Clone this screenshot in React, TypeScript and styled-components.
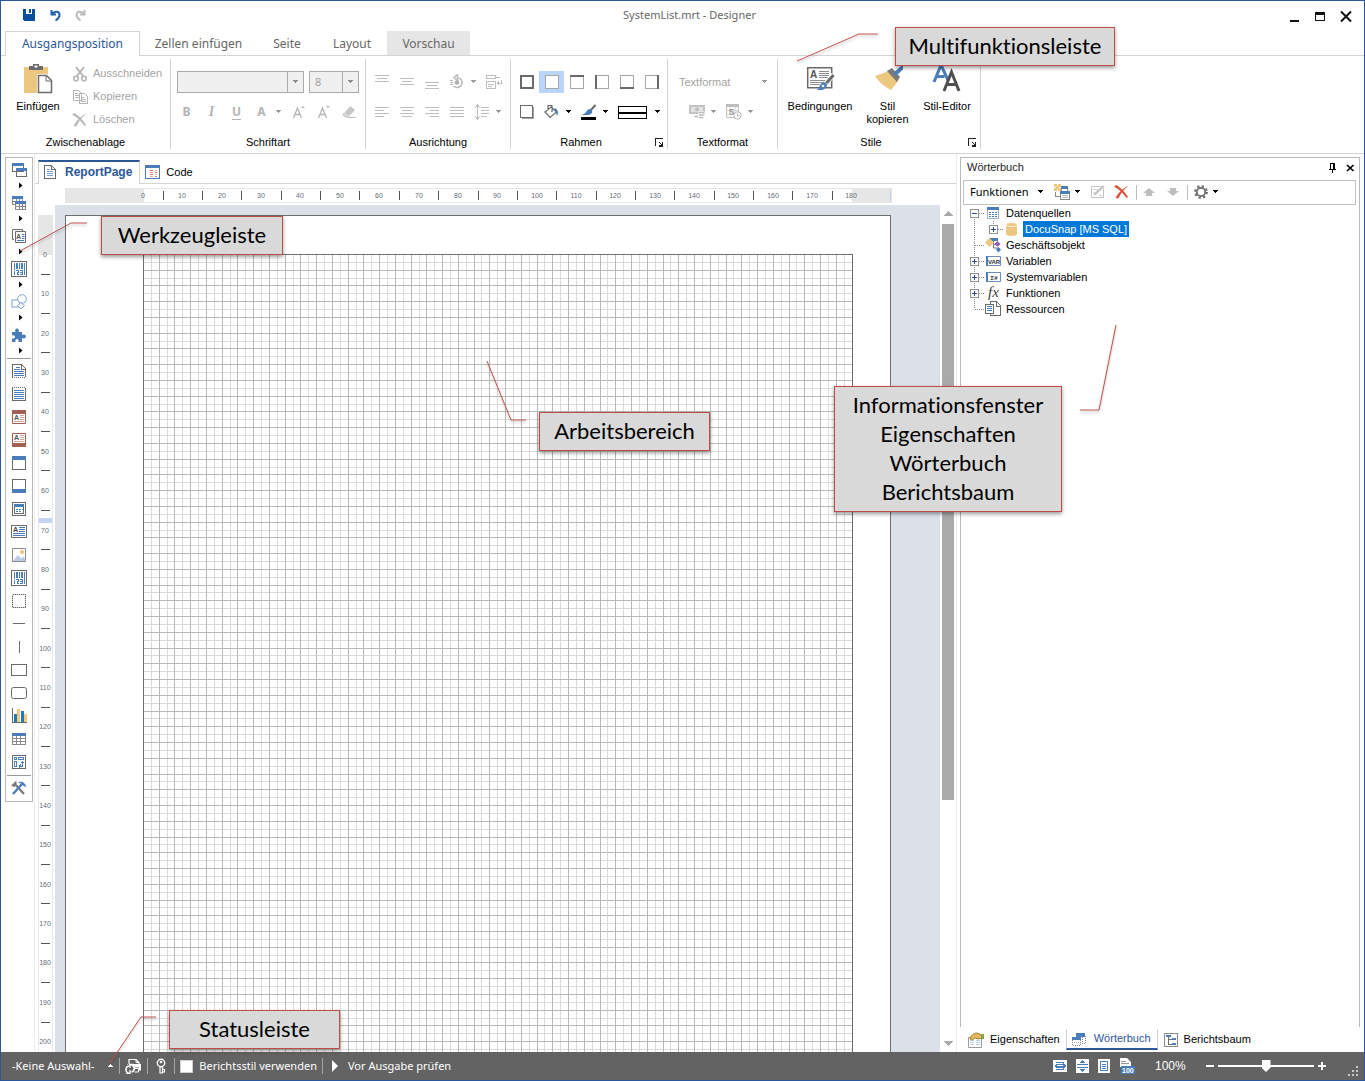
import React from 'react';
import styled, { createGlobalStyle, css } from 'styled-components';

const sans = '"Liberation Sans", Arial, sans-serif';
const ui = '"Noto Sans", "Open Sans", sans-serif';
const blue = '#2b579a';
const line = '#d4d4d4';
const steel = '#4a7ebb';
const ink = '#6a6a6a';
const mute = '#b4b4b4';

const GlobalStyle = createGlobalStyle`
  * { box-sizing: border-box; }
  body { margin: 0; background: #fff; }
  button, select, input { font: inherit; color: inherit; }
  svg { display: block; flex: none; }
`;

const Window = styled.div`
  position: relative;
  display: flex;
  flex-direction: column;
  height: 100vh;
  border: 1px solid ${blue};
  background: #fff;
  color: #000;
  font: 11px/13px ${sans};
  overflow: hidden;
`;

const PlainButton = styled.button`
  display: flex;
  align-items: center;
  justify-content: center;
  padding: 0;
  border: 0;
  background: none;
  white-space: nowrap;
`;

/* ---------- title bar ---------- */

const TitleBar = styled.header`
  display: grid;
  grid-template-columns: 1fr auto 1fr;
  align-items: center;
  height: 30px;
  padding-bottom: 2px;
  flex: none;
`;
const QuickAccess = styled.div`
  display: flex;
  gap: 10px;
  padding-left: 20px;
`;
const Title = styled.h1`
  margin: 0;
  padding-left: 14px;
  font: 11px/16px ${ui};
  color: #666;
`;
const WindowButtons = styled.div`
  display: flex;
  justify-content: flex-end;
  gap: 10px;
  padding: 2px 10px 0 0;
`;

/* ---------- ribbon ---------- */

const Tabs = styled.nav`
  display: flex;
  flex: none;
  height: 25px;
  padding-left: 4px;
  border-bottom: 1px solid ${line};
`;
const Tab = styled.button<{ $w: number; $active?: boolean; $shaded?: boolean }>`
  width: ${p => p.$w}px;
  height: 24px;
  padding: 2px 0 0;
  border: 0;
  background: ${p => (p.$shaded ? '#e6e6e6' : 'none')};
  font: 12px/16px ${ui};
  color: #666;
  white-space: nowrap;
  ${p => p.$active && css`
    height: 25px;
    padding: 0;
    border: 1px solid ${line};
    border-bottom: 0;
    background: #fff;
    color: ${blue};
  `}
`;
const Ribbon = styled.div`
  display: flex;
  flex: none;
  height: 98px;
  padding-top: 3px;
  border-bottom: 1px solid ${line};
`;
const Group = styled.section<{ $w: number }>`
  display: flex;
  flex-direction: column;
  width: ${p => p.$w}px;
  height: 90px;
  border-right: 1px solid ${line};
`;
const GroupBody = styled.div<{ $pad?: string }>`
  display: flex;
  height: 76px;
  padding: ${p => p.$pad ?? '0'};
`;
const ToolRows = styled.div`
  display: flex;
  flex-direction: column;
  gap: 8px;
`;
const GroupFoot = styled.div`
  display: flex;
  align-items: center;
  height: 14px;
  button { width: 16px; }
`;
const GroupName = styled.h2`
  flex: 1;
  margin: 0;
  font: 11px/14px ${sans};
  text-align: center;
`;
const BigButton = styled(PlainButton)<{ $w: number }>`
  flex-direction: column;
  justify-content: flex-start;
  width: ${p => p.$w}px;
  padding-top: 4px;
  line-height: 13px;
  white-space: normal;
  svg { margin-bottom: 6px; }
`;
const ClipList = styled.div`
  display: flex;
  flex-direction: column;
  padding: 3px 0 0 5px;
`;
const ClipButton = styled(PlainButton)`
  justify-content: flex-start;
  gap: 5px;
  height: 23px;
  color: #a3a3a3;
`;
const ToolRow = styled.div<{ $indent?: number }>`
  display: flex;
  align-items: center;
  height: 22px;
  padding-left: ${p => p.$indent ?? 0}px;
`;
const Tool = styled(PlainButton)<{ $on?: boolean; $w?: number }>`
  width: ${p => p.$w ?? 25}px;
  height: 22px;
  background: ${p => (p.$on ? '#bad4fb' : 'none')};
`;
const CaretButton = styled(PlainButton)`
  justify-content: flex-end;
  width: 8px;
  height: 22px;
  margin-right: 4px;
`;
const Glyph = styled.span<{ $italic?: boolean; $line?: boolean }>`
  font: ${p => (p.$italic ? 'italic bold 14px/16px "Liberation Serif", serif' : `bold 12px/16px ${ui}`)};
  color: ${mute};
  text-decoration: ${p => (p.$line ? 'underline' : 'none')};
  text-underline-offset: 3px;
`;
const SelectBox = styled.label<{ $w: number; $flat?: boolean }>`
  display: flex;
  align-items: center;
  width: ${p => p.$w}px;
  height: 22px;
  border: ${p => (p.$flat ? '0' : '1px solid #ababab')};
  background: ${p => (p.$flat ? 'none' : '#f0f0f0')};
  color: #a3a3a3;
  font: 11px/20px ${p => (p.$flat ? sans : ui)};
  select {
    flex: 1;
    min-width: 0;
    height: 20px;
    padding: 0 0 0 5px;
    border: 0;
    border-right: ${p => (p.$flat ? '0' : '1px solid #ababab')};
    background: none;
    appearance: none;
    opacity: 1;
  }
  svg { margin: 0 4px 0 5px; }
`;
const Combos = styled.div`
  display: flex;
  gap: 5px;
  padding-left: 3px;
`;

/* ---------- workspace ---------- */

const Workspace = styled.main`
  display: flex;
  flex: 1;
  min-height: 0;
`;
const Toolbox = styled.aside`
  display: flex;
  flex-direction: column;
  align-self: flex-start;
  width: 28px;
  margin: 3px 0 0 4px;
  padding-bottom: 2px;
  border: 1px solid #b9b9b9;
`;
const FlyoutTool = styled(PlainButton)`
  flex-direction: column;
  justify-content: flex-start;
  height: 33px;
  span { display: flex; align-items: center; height: 24px; }
`;
const BoxTool = styled(PlainButton)`
  height: 23px;
`;
const BoxRule = styled.hr`
  width: 24px;
  height: 1px;
  margin: 2px auto 0;
  border: 0;
  background: #9a9a9a;
`;
const Editor = styled.section`
  display: flex;
  flex: 1;
  flex-direction: column;
  min-width: 0;
  margin-left: 1px;
  border: solid #ececec;
  border-width: 0 1px;
`;
const DocTabs = styled.div`
  display: flex;
  flex: none;
  height: 30px;
  padding: 6px 0 0 3px;
  border-bottom: 1px solid ${line};
`;
const DocTab = styled.button<{ $active?: boolean }>`
  display: flex;
  align-items: center;
  gap: 5px;
  height: 24px;
  padding: 0 5px;
  border: 0;
  background: none;
  ${p => p.$active && css`
    gap: 9px;
    padding: 0 7px 2px 5px;
    border: solid ${line};
    border-width: 2px 1px 0;
    border-top-color: ${blue};
    background: #fff;
    color: ${blue};
    font: bold 12px/14px ${sans};
  `}
`;
const TopRuler = styled.div`
  flex: none;
  height: 21px;
  padding: 4px 0 0 30px;
  overflow: hidden;
`;
const EditorBody = styled.div`
  display: flex;
  flex: 1;
  min-height: 0;
`;
const SideRuler = styled.div`
  width: 20px;
  padding: 10px 0 0 3px;
  overflow: hidden;
`;
const Canvas = styled.div`
  flex: 1;
  min-width: 0;
  padding: 10px 0 0 10px;
  background: #dce1e9;
  overflow: hidden;
`;
const Paper = styled.div`
  width: 826px;
  height: 1170px;
  padding: 38px 0 0 77px;
  border: 1px solid #6e6e6e;
  background: #fff;
`;
const Scrollbar = styled.div`
  display: flex;
  flex-direction: column;
  align-items: center;
  width: 16px;
  padding: 6px 0;
`;
const ScrollTrack = styled.div`
  flex: 1;
  width: 12px;
  margin: 8px 0 6px;
`;
const ScrollThumb = styled.div`
  height: 71%;
  background: #aaa;
`;

/* ---------- dock ---------- */

const Dock = styled.aside`
  display: flex;
  flex-direction: column;
  width: 400px;
  margin: 3px 4px 0 3px;
`;
const DockPanel = styled.div`
  flex: 1;
  border: 1px solid #b9b9b9;
  border-bottom: 0;
`;
const DockTitle = styled.div`
  display: flex;
  align-items: center;
  height: 19px;
  padding-left: 6px;
  color: #222;
  h2 { flex: 1; margin: 0; font: inherit; }
`;
const DockTitleButton = styled(PlainButton)`
  width: 18px;
  height: 16px;
`;
const DockTools = styled.div`
  display: flex;
  align-items: center;
  height: 25px;
  margin: 3px 3px 0 2px;
  padding: 0 0 1px 6px;
  border: 1px solid #c3c3c3;
`;
const TextTool = styled(PlainButton)`
  gap: 10px;
  margin-right: 10px;
  font: 11px/16px ${ui};
`;
const DockTool = styled(PlainButton)<{ $w: number }>`
  justify-content: flex-start;
  gap: 5px;
  width: ${p => p.$w}px;
  height: 20px;
`;
const ToolRule = styled.span`
  width: 1px;
  height: 15px;
  margin-right: 6px;
  background: #bdbdbd;
`;
const Tree = styled.ul`
  margin: 0;
  padding: 0 0 0 5px;
  list-style: none;
`;
const TreeRow = styled.li`
  display: flex;
  align-items: center;
  height: 16px;
`;
const TreeLabel = styled.span<{ $selected?: boolean }>`
  margin-left: 3px;
  padding: 0 2px;
  line-height: 16px;
  color: ${p => (p.$selected ? '#fff' : '#000')};
  background: ${p => (p.$selected ? '#0078d7' : 'none')};
`;
const DockTabs = styled.div`
  display: flex;
  height: 25px;
  padding: 2px 0 3px 2px;
`;
const DockTab = styled.button<{ $active?: boolean }>`
  display: flex;
  align-items: center;
  gap: 6px;
  height: 21px;
  padding: 0 6px;
  border: 0;
  background: none;
  ${p => p.$active && css`
    gap: 8px;
    padding: 0 6px 0 5px;
    border: solid ${line};
    border-width: 0 1px 2px;
    border-bottom-color: ${blue};
    color: ${blue};
  `}
`;

/* ---------- status bar ---------- */

const StatusBar = styled.footer`
  display: flex;
  align-items: center;
  flex: none;
  height: 28px;
  padding: 0 4px 0 11px;
  background: #636363;
  color: #fff;
  font: 11px/16px ${ui};
`;
const StatusButton = styled(PlainButton)<{ $gap?: number }>`
  gap: ${p => p.$gap ?? 10}px;
`;
const StatusRule = styled.span`
  width: 1px;
  height: 16px;
  margin: 0 5px;
  background: #a5a5a5;
`;
const StatusCheck = styled.label`
  display: flex;
  align-items: center;
  gap: 6px;
  input {
    width: 13px;
    height: 13px;
    margin: 0;
    appearance: none;
    border: 1px solid #d0d0d0;
    background: #fff;
  }
`;
const Push = styled.span`
  flex: 1;
`;
const ZoomModes = styled.div`
  display: flex;
  gap: 8px;
  margin-right: 20px;
`;
const ZoomSlider = styled.input`
  width: 96px;
  height: 14px;
  margin: 0 4px;
  appearance: none;
  background: linear-gradient(#fff, #fff) center / 100% 2px no-repeat;
  &::-webkit-slider-thumb {
    appearance: none;
    width: 9px;
    height: 12px;
    background: #fff;
    clip-path: polygon(0 0, 100% 0, 100% 65%, 50% 100%, 0 65%);
  }
`;
const ZoomValue = styled.output`
  width: 51px;
  font: 12px/16px ${sans};
`;
const Grip = styled.span`
  align-self: flex-end;
  margin: 0 1px 3px 22px;
`;

/* ---------- annotations ---------- */

const Callout = styled.div<{ $x: number; $y: number; $w: number }>`
  position: absolute;
  left: ${p => p.$x}px;
  top: ${p => p.$y}px;
  width: ${p => p.$w}px;
  padding: 3px 0 5px;
  border: 1px solid #be4b48;
  background: #d9d9d9;
  box-shadow: 0 2px 4px rgba(0, 0, 0, 0.4);
  font: 22px/29px Lato, Calibri, sans-serif;
  font-variant-ligatures: none;
  text-align: center;
  white-space: pre-line;
`;
const Leaders = styled.svg`
  position: absolute;
  left: -1px;
  top: -1px;
  pointer-events: none;
  filter: drop-shadow(0 2px 1px rgba(0, 0, 0, 0.25));
`;

/* ---------- icons ---------- */

type IconProps = { w?: number; h?: number; soft?: boolean; children: React.ReactNode };
const Icon = ({ w = 16, h = 16, soft, children }: IconProps) => (
  <svg width={w} height={h} viewBox={`0 0 ${w} ${h}`} fill="none" shapeRendering={soft ? 'auto' : 'crispEdges'} aria-hidden="true">
    {children}
  </svg>
);

const Caret = ({ color = '#000' }: { color?: string }) => (
  <Icon w={6} h={4}><path d="M0 0h5v1H0zM1 1h3v1H1zM2 2h1v1H2z" fill={color} /></Icon>
);
const SideCaret = () => (
  <Icon w={8} h={7} soft><path d="M4 .5v6l3.500-3z" fill="#000" /></Icon>
);
const Launcher = () => (
  <Icon w={9} h={9}><path d="M.5 8V.5H8M4 4l3 3" stroke="#222" /><path d="M8 4v4.500H4V7h3V4z" fill="#222" /></Icon>
);

const SaveIcon = () => (
  <Icon><path d="M2 2h12v12H3l-1-1z" fill="#0b4f9c" /><path d="M5 2h6v5H5z" fill="#fff" /><path d="M8 2h2v4H8z" fill="#0b4f9c" /></Icon>
);
const UndoIcon = ({ color = '#1f5fae', flip }: { color?: string; flip?: boolean }) => (
  <Icon soft><g transform={flip ? 'translate(16 0) scale(-1 1)' : undefined}>
    <path d="M4.500 3v4.500H9M5 7C7 4 12.500 3.500 12.500 8c0 3-2 4-4 5.500" stroke={color} strokeWidth="2" />
  </g></Icon>
);
const PasteIcon = () => (
  <Icon w={30} h={31} soft>
    <path d="M1 4h24v26H1z" fill="#ecc77f" />
    <path d="M6 7V3h4V1h6v2h4v4z" fill="#6c6c6c" /><path d="M11.500 2.500h3v2h-3z" fill="#fff" />
    <path d="M14 11h10l6 6v14H14z" fill="#fff" />
    <path d="M15.500 12.500h8l5 5v12h-13z" fill="#fff" stroke="#6c6c6c" strokeWidth="1.500" /><path d="M23 12.500V18h5.500" stroke="#6c6c6c" />
  </Icon>
);
const CutIcon = () => (
  <Icon soft><path d="M4 1l7 9M12 1L5 10" stroke="#b5b5b5" strokeWidth="2" /><circle cx="4" cy="12.500" r="2.300" stroke="#b5b5b5" strokeWidth="1.600" /><circle cx="12" cy="12.500" r="2.300" stroke="#b5b5b5" strokeWidth="1.600" /></Icon>
);
const CopyIcon = () => (
  <Icon><path d="M1.500 1.500h5l3 3v7h-8zM7.500 4.500h5l3 3v7h-8z" fill="#fff" stroke="#b5b5b5" /><path d="M3 4.500h3M3 6.500h4M3 8.500h4M9 8.500h3M9 10.500h5M9 12.500h5" stroke="#b5b5b5" /></Icon>
);
const DeleteIcon = ({ color = '#b9b9b9' }: { color?: string }) => (
  <Icon soft><path d="M0 2.500L2.500 1C7 4 11 8 14 13l-1.500 1C9 9 5 5 0 2.500z" fill={color} /><path d="M15 1.500C10 5 6.500 9 4.500 14.500L1.500 14C5 8 9 4 15 1.500z" fill={color} /></Icon>
);
const EraserIcon = () => (
  <Icon w={14} h={14} soft><path d="M8.500 1L13 5l-6 6.500-4.500-4z" fill="#c9c9c9" /><path d="M2 8l4.500 4H3L.5 9.500z" fill="#dedede" stroke="#c3c3c3" /><path d="M6 12.500h8" stroke="#c3c3c3" /></Icon>
);
const GrowIcon = ({ down }: { down?: boolean }) => (
  <Icon w={14} h={16} soft>
    <path d="M1.500 14L5.500 4l4 10M3 10.500h5" stroke={mute} strokeWidth="1.300" />
    <path d={down ? 'M9 2h4l-2 2z' : 'M9 4h4l-2-2z'} fill={mute} />
  </Icon>
);
const Lines = ({ rows }: { rows: number[][] }) => (
  <Icon w={14} h={14}>{rows.map(([x, y, w]) => <path key={y} d={`M${x} ${y}.5h${w}`} stroke="#bebebe" />)}</Icon>
);
const RotateIcon = () => (
  <Icon w={14} h={16} soft><path d="M7 3.500a5 5 0 11-3.500 8.500M7.500.5v6L4 3.500z" stroke="#bebebe" strokeWidth="1.600" /><circle cx="7" cy="8.500" r="2.300" fill="#b0b0b0" /><path d="M0 6.500h3M0 8.500h3M0 10.500h3" stroke="#bebebe" /></Icon>
);
const WrapIcon = () => (
  <Icon><path d="M.5 1.500h9v3h-9zM.5 7.500h9v7h-9zM10 3.500h4M2 10.500h6M2 12.500h4M15.500 6v3h-4" stroke="#bebebe" /><path d="M13 6v6l-3-3z" fill="#bebebe" /></Icon>
);
const SpacingIcon = () => (
  <Icon><path d="M3.500 1v14M7 3.500h8M7 6.500h8M7 9.500h8M7 12.500h6" stroke="#bebebe" /><path d="M1 4l2.500-3L6 4M1 12l2.500 3L6 12" stroke="#bebebe" /></Icon>
);
const BorderIcon = ({ side }: { side: string }) => {
  const edge: Record<string, string> = { top: 'M0 1h14', left: 'M1 0v14', bottom: 'M0 13h14', right: 'M13 0v14' };
  return (
    <Icon w={14} h={14}>
      <path d="M.5.5h13v13H.5z" stroke="#a6a6a6" fill="#fff" />
      {side === 'all' && <path d="M1 1h12v12H1z" stroke={ink} strokeWidth="2" />}
      {edge[side] && <path d={edge[side]} stroke={ink} strokeWidth="2" />}
    </Icon>
  );
};
const ShadowIcon = () => (
  <Icon w={14} h={14}><path d="M2 13.500h12M13.500 2v12" stroke="#a6a6a6" /><path d="M.5.5h12v12H.5z" stroke={ink} fill="#fff" /></Icon>
);
const BucketIcon = () => (
  <Icon soft><path d="M1 8l6-5 5.500 5L6 13.500zM4 6V1.500h4V8" stroke={ink} strokeWidth="1.200" fill="#fff" /><path d="M10 4c4 1 5 4 3 8-.5-2-1-4-3-8z" fill={steel} /></Icon>
);
const PenIcon = () => (
  <Icon w={16} h={18} soft><path d="M14.500 2L9 8" stroke={ink} strokeWidth="2" /><path d="M9.500 6c3 2 2 5-2 6H0c2-1 4-1 5-3 1-2 2.500-3.500 4.500-3z" fill={steel} /><path d="M0 14h15v3H0z" fill="#000" /></Icon>
);
const LineStyleIcon = () => (
  <Icon w={30} h={13}><path d="M.5.5h28v12H.5z" stroke="#000" /><path d="M0 7h29" stroke="#000" strokeWidth="2" /></Icon>
);
const CurrencyIcon = () => (
  <Icon soft><path d="M1 2h14v7H1z" stroke="#c3c3c3" strokeWidth="2" fill="#e3e3e3" /><circle cx="8" cy="5.500" r="2" fill="#bdbdbd" /><path d="M9.500 7.500h6v2h-6zM9.500 10h6v2h-6zM9.500 12.500h5v2h-5zM5 11.500h4.500v2H5z" fill="#bdbdbd" stroke="#fff" strokeWidth=".5" /></Icon>
);
const DateIcon = () => (
  <Icon soft><path d="M.5.5h12v13H.5z" stroke="#bdbdbd" /><path d="M0 0h13v3H0z" fill="#bdbdbd" /><path d="M0 6.500h13M0 10h13M4 3v11M9 3v11" stroke="#d4d4d4" /><text x="3" y="11" fontSize="9" fontWeight="bold" fontFamily="Liberation Sans" fill="#a0a0a0">5</text><circle cx="11.500" cy="11.500" r="3.700" fill="#fff" stroke="#b5b5b5" /><path d="M11.500 9.500v2.500h2" stroke="#b5b5b5" /></Icon>
);
const ConditionsIcon = () => (
  <Icon w={30} h={31} soft>
    <path d="M2.700 4.700h24v20h-24z" stroke={ink} strokeWidth="1.500" />
    <text x="5" y="15" fontSize="10" fontWeight="bold" fontFamily="Liberation Sans" fill="#555">A</text>
    <path d="M14 8.500h10M14 10.500h10M14 12.500h10M14 14.500h9M5 17.500h17M5 19.500h15M5 21.500h10" stroke="#8d8d8d" />
    <path d="M28.500 11.500l-8 9.500" stroke="#fff" strokeWidth="5" /><path d="M28.500 12l-7 8" stroke={ink} strokeWidth="3" />
    <path d="M20.500 19.500c3 2 1 6-3 7.500h-6c3-1 2-3 4-5.500 1.500-2 3-2.500 5-2z" fill={steel} /><circle cx="18" cy="23" r="1.300" fill="#fff" />
  </Icon>
);
const BrushIcon = () => (
  <Icon w={30} h={31} soft><path d="M2 13l14-5 9 10-7 9C14 25 6 20 2 13z" fill="#ecc77f" /><path d="M14 8l5-3 8 9-3 5z" fill="#7a7a7a" /><path d="M22 11l9-8" stroke={steel} strokeWidth="4" /></Icon>
);
const StyleEditorIcon = () => (
  <Icon w={30} h={31} soft><path d="M2 19L9 2l7 15M4.500 13.500h8" stroke={steel} strokeWidth="3" /><path d="M12 28l7.500-19L27 28M14.500 21.500h10" stroke="#505050" strokeWidth="3" /></Icon>
);

const BandsIcon = () => (
  <Icon><path d="M1.500 1.500h11v8h-11zM5.500 6.500h10v8h-10z" fill="#fff" stroke={ink} /><path d="M1 1h12v3H1zM5 6h11v3H5z" fill={steel} /></Icon>
);
const CrossIcon = () => (
  <Icon><path d="M1.500 1.500h10v8h-10zM1 6.500h10M5.500 4v6M8.500 4v6" fill="#fff" stroke="#8a8a8a" /><path d="M4.500 6.500h10v8h-10zM4 11.500h11M8.500 9v6M11.500 9v6" fill="#fff" stroke="#8a8a8a" /><path d="M1 1h11v3H1zM4 6h11v3H4z" fill={steel} /></Icon>
);
const ComponentsIcon = () => (
  <Icon soft><path d="M3 11.500H1.500v-10h10V3" stroke={ink} /><path d="M4.500 3.500h10v11h-10z" fill="#fff" stroke={ink} /><text x="5" y="10.500" fontSize="7" fontWeight="bold" fontFamily="Liberation Sans" fill="#555">A</text><path d="M11 6.500h2.500M11 8.500h2.500M11 10.500h2.500M6 12.500h7" stroke={steel} /></Icon>
);
const BarcodeIcon = () => (
  <Icon><rect x=".5" y=".5" width="15" height="15" rx="1" stroke={ink} /><path d="M3 2h1v7H3zM5 2h2v6H5zM8 2h1v6H8zM10 2h2v6h-2zM13 2h1v12h-1zM3 10h1v4H3z" fill={steel} /><path d="M5 9.500h2.500V11H6v2.500h2M9 9.500h2.500v4H9M9 11.500h2" stroke={steel} /></Icon>
);
const ShapesIcon = () => (
  <Icon soft><rect x="1" y="6" width="8" height="7" stroke="#7ea3d0" fill="#fff" /><circle cx="11" cy="5" r="4.300" stroke="#7ea3d0" fill="#fff" /><path d="M10 8.500l3.500 3L10 15l-3.500-3.500z" stroke="#7ea3d0" fill="#fff" /></Icon>
);
const PuzzleIcon = () => (
  <Icon soft><path d="M1 5h3.500C3.500 3 4.500 1.500 6 1.500S8.500 3 7.500 5H11v3c2-1 4 0 4 1.500S13 12 11 11v4H7.500c.5-2-.5-3-1.500-3s-2 1-1.500 3H1v-3.500c2 .5 3-.5 3-1.500S3 8 1 8.500z" fill={steel} /></Icon>
);
const TitleBandIcon = () => (
  <Icon><path d="M1.500 14V1.500h9l4 4V14M10.500 2v4h4" stroke={ink} /><path d="M1 14.500h14" stroke={ink} strokeDasharray="1 1" /><path d="M5 4.500h4M3 6.500h6M3 8.500h10M3 10.500h10M3 12.500h10" stroke={steel} /></Icon>
);
const DataBandIcon = () => (
  <Icon><path d="M1.500 2v12.500h13V2" stroke={ink} /><path d="M1 1.500h14" stroke={ink} strokeDasharray="1 1" /><path d="M3 4.500h10M3 6.500h10M3 8.500h10M3 10.500h10M3 12.500h10" stroke={steel} /></Icon>
);
const HeadBandIcon = ({ foot }: { foot?: boolean }) => (
  <Icon soft><path d="M1.500 1.500h13v13h-13z" stroke="#a1604f" /><path d={foot ? 'M1 11h14v4H1z' : 'M1 1h14v4H1z'} fill="#a1604f" /><text x="3" y={foot ? 8 : 11} fontSize="7" fontWeight="bold" fontFamily="Liberation Sans" fill="#555">A</text><g transform={foot ? 'translate(0 -3)' : undefined}><path d="M9 6.500h4M9 8.500h4M9 10.500h4M3 12.500h10" stroke="#cfa69c" /></g></Icon>
);
const PanelIcon = ({ foot }: { foot?: boolean }) => (
  <Icon><path d="M1.500 1.500h13v13h-13z" stroke={ink} /><path d={foot ? 'M1 11h14v4H1z' : 'M1 1h14v4H1z'} fill={steel} /></Icon>
);
const SubPanelIcon = () => (
  <Icon><path d="M1.500 1.500h13v13h-13zM3.500 3.500h9v9h-9z" stroke={ink} /><path d="M3 3h10v3H3z" fill={steel} /><path d="M5 8.500h2M8 8.500h2M11 8.500h1M5 10.500h2M8 10.500h2" stroke={steel} /></Icon>
);
const TextIcon = () => (
  <Icon soft><path d="M.5 1.500h15v12H.5z" stroke={ink} /><text x="2" y="8" fontSize="7" fontWeight="bold" fontFamily="Liberation Sans" fill="#444">A</text><path d="M8 3.500h6M8 5.500h6M8 7.500h6M2 9.500h12M2 11.500h12" stroke={steel} /></Icon>
);
const ImageIcon = () => (
  <Icon soft><path d="M1.500 1.500h13v13h-13z" stroke="#8a8a8a" /><circle cx="11" cy="5" r="2" fill="#f0c478" /><path d="M2 14l5-6 3 3.500 2-2 2.500 3V14z" fill="#b9cde5" /></Icon>
);
const PanelDottedIcon = () => (
  <Icon><path d="M1.500 1.500h13v13h-13z" stroke="#c9c9c9" /><path d="M1.500 1.500h13v13h-13z" stroke={ink} strokeDasharray="1 1" /></Icon>
);
const ShapeIcon = ({ d, r }: { d?: string; r?: number }) => (
  <Icon soft>{d ? <path d={d} stroke={ink} /> : <rect x=".5" y="2.500" width="15" height="11" rx={r} stroke={ink} />}</Icon>
);
const ChartIcon = () => (
  <Icon><path d="M1.500 0v14.500H16" stroke={ink} /><path d="M3 6h3v8H3zM10 3h3v11h-3z" fill="#1b7dbb" /><path d="M6 1h3v13H6zM13 6h3v8h-3z" fill="#fbc878" /></Icon>
);
const TableIcon = () => (
  <Icon><path d="M1.500 2.500h13v11h-13zM1 7.500h14M1 10.500h14M5.500 5v9M9.500 5v9" stroke="#8a8a8a" /><path d="M1 2h14v3H1z" fill={steel} /></Icon>
);
const CrossTabIcon = () => (
  <Icon><path d="M1.500 1.500h13v13h-13z" stroke={ink} /><path d="M3.500 3.500h2v2h-2zM7.500 3.500h5v2h-5zM3.500 7.500h2v5h-2zM8 12.500h3.500V8M8 12.500l2-2M8 12.500l1 1M10 9l1.500-1.500L13 9" stroke={steel} /></Icon>
);
const WrenchIcon = () => (
  <Icon soft><path d="M3 3l10 11M1 4.500c2 2 4 1 3.500-3" stroke="#777" strokeWidth="2.200" /><path d="M2 14L11 4" stroke={steel} strokeWidth="2.400" /><path d="M7 2c4-1 7 0 8.500 5l-3-1-2-2z" fill={steel} /></Icon>
);

const PageIcon = () => (
  <Icon w={12} h={16}><path d="M.5 1.500h7l4 4v9H.5zM7.500 1v4h4" stroke={ink} /><path d="M3 5.500h3M3 7.500h6M3 9.500h6M3 11.500h6" stroke="#7ea3d0" /></Icon>
);
const CodeIcon = () => (
  <Icon><path d="M.5 1.500h14v13H.5z" stroke={steel} /><path d="M0 1h15v3H0z" fill={steel} /><path d="M5 6.500h3M5 10.500h3M10 8.500h2M10 12.500h2" stroke="#e8735a" /><path d="M10 6.500h2M5 8.500h3M10 10.500h2M5 12.500h3" stroke="#f0a898" /></Icon>
);
const PinIcon = () => (
  <Icon w={9} h={10}><path d="M2.500 0v5.500M6 0v6M2 .5h5M1 6.500h7M4.500 7v3" stroke="#000" /><path d="M5 0h2v6H5z" fill="#000" /></Icon>
);
const CloseSmallIcon = () => (
  <Icon w={9} h={8} soft><path d="M1 1l6.500 6M7.500 1L1 7" stroke="#000" strokeWidth="1.700" /></Icon>
);
const NewItemIcon = () => (
  <Icon><path d="M7.500 3.500h6v4h-6zM1.500 8v4.500H6M6.500 8v7.500h9V8z" stroke="#8a8a8a" /><path d="M7 2h7v3H7zM6 7h10v3H6z" fill={steel} /><path d="M8 11.500h6M8 13.500h6" stroke="#b5b5b5" /><path d="M0 0h7v7H0z" fill="#f0c67c" /><path d="M3 0h1v2H3zM3 5h1v2H3zM0 3h2v1H0zM5 3h2v1H5z" fill="#fff" /></Icon>
);
const EditIcon = () => (
  <Icon soft><path d="M1.500 2.500h12v11h-12z" stroke="#c3c3c3" /><path d="M3 5.500h7M3 8.500h4M9 11.500h3" stroke="#d0d0d0" /><path d="M15 2.500L6 11l-3 1 1-3 9-8z" fill="#c3c3c3" stroke="#fff" strokeWidth=".5" /></Icon>
);
const MoveIcon = ({ down }: { down?: boolean }) => (
  <Icon w={12} h={8} soft><path d={down ? 'M3 0h6v3h3L6 8 0 3h3z' : 'M3 8h6V5h3L6 0 0 5h3z'} fill="#bdbdbd" /></Icon>
);
const GearIcon = () => (
  <Icon w={14} h={14} soft><circle cx="7" cy="7" r="4.200" stroke={ink} strokeWidth="1.800" /><circle cx="7" cy="7" r="5.900" stroke={ink} strokeWidth="2" strokeDasharray="2.300 2.334" /></Icon>
);

const DataIcon = () => (
  <Icon><path d="M2.500 2.500h11v11h-11z" stroke="#9fb2cc" /><path d="M2 2h12v3H2z" fill={steel} /><path d="M4 7.500h8M4 9.500h8M4 11.500h8" stroke={steel} strokeDasharray="2 1" /></Icon>
);
const DbIcon = () => (
  <Icon soft><path d="M2 4v9c0 2.500 11 2.500 11 0V4z" fill="#ecc77f" /><ellipse cx="7.500" cy="3.500" rx="5.500" ry="2" fill="#ecc77f" stroke="#fff" strokeWidth=".8" /></Icon>
);
const ObjectIcon = () => (
  <Icon soft><path d="M7 2.500h6M8.500 4v7h4M9 7.500h4" stroke="#777" /><path d="M5 1h8v3H5z" fill={steel} /><path d="M4.500 1L9 5.500 4.500 10 0 5.500z" fill="#ecc77f" /><path d="M12.500 4l3 3-3 3-3-3z" fill="#8e62b3" /><path d="M13.500 10l2.500 2.500-2.500 3-2.500-3z" fill={steel} /></Icon>
);
const TagIcon = ({ text }: { text: string }) => (
  <Icon soft><path d="M1.500 3.500h14v9h-14z" stroke="#6d8fbd" /><path d="M1 3h2v10H1z" fill={steel} /><text x="9" y="10.500" textAnchor="middle" fontSize="6" fontWeight="bold" fontFamily="Liberation Sans" fill="#333">{text}</text></Icon>
);
const FxIcon = () => (
  <Icon soft><text x="3" y="12" fontSize="15" fontStyle="italic" fontFamily="Liberation Serif" fill="#444">fx</text></Icon>
);
const ResourceIcon = () => (
  <Icon><path d="M5.500.5h6l4 4v10h-10zM11.500 1v4h4" fill="#fff" stroke={ink} /><path d="M.5 3.500h8v9h-8z" fill="#fff" stroke={ink} /><path d="M2 5.500h5M2 7.500h5M2 9.500h5" stroke={steel} /></Icon>
);
const PropsIcon = () => (
  <Icon soft><path d="M.5 5.500h13v10H.5z" stroke="#9a9a9a" /><path d="M2 8.500h4M8 8.500h4M2 10.500h4M8 10.500h4M2 12.500h4M8 12.500h4" stroke="#b9cde5" /><path d="M2 7c0-3 4-6 7-6l5 2v3l-4 1-3-1-3 2z" fill="#e5b95c" stroke="#8c6a20" strokeWidth=".8" /><path d="M14 2h2v5h-2z" fill="#6fb04d" /></Icon>
);
const DictIcon = () => (
  <Icon w={14}><path d="M4 2h9v4H4zM0 6h9v3H0z" fill={steel} /><path d="M10.500 6v6.500h3V5M.5 9v5.500h8V9" stroke="#8a8a8a" strokeDasharray="1 1" /><path d="M2 11.500h6" stroke="#bdbdbd" strokeDasharray="1 1" /></Icon>
);
const OutlineIcon = () => (
  <Icon w={14}><path d="M.5 1.500h13v13H.5z" stroke="#8a8a8a" /><path d="M2 3h5v2H2zM8 6h4v2H8zM8 11h4v2H8z" fill={steel} /><path d="M4.500 5v7H8M5 7.500h3" stroke={ink} /></Icon>
);
const RefreshReportIcon = () => (
  <Icon w={17} soft>
    <path d="M4 6V1.500h7l3 3V6" stroke="#fff" strokeWidth="1.200" /><path d="M11 1.500v3h3" stroke="#fff" />
    <path d="M2 6h14v6.500h-2V9.500H9V8H2z" fill="#fff" /><path d="M9.500 10.500h4v3.500h-4" stroke="#fff" />
    <path d="M4.500 7.500a3.800 3.800 0 000 7M5.500 7.500a3.800 3.800 0 010 7" stroke="#636363" strokeWidth="4" />
    <path d="M3.500 15a3.600 3.600 0 01.5-7M6.500 7a3.600 3.600 0 010 7" stroke="#fff" strokeWidth="1.500" />
    <path d="M1.500 15.500H5V12M8.500 6.500H5V10" stroke="#fff" strokeWidth="1.300" />
  </Icon>
);
const KeyIcon = () => (
  <Icon soft><circle cx="8" cy="5" r="3.700" stroke="#fff" strokeWidth="1.400" /><circle cx="8" cy="4" r="1.300" fill="#fff" /><path d="M7 8.500V15h2.500V8.500M9.500 11.500h2v2.500h-2" stroke="#fff" strokeWidth="1.200" /></Icon>
);

type BranchProps = { box?: 'plus' | 'minus'; up?: boolean; down?: boolean; out?: boolean };
const Branch = ({ box, up, down, out = true }: BranchProps) => (
  <Icon w={19} h={16}>
    {up && <path d="M8.500 0v8" stroke="#8a8a8a" strokeDasharray="1 1" />}
    {down && <path d="M8.500 8v8" stroke="#8a8a8a" strokeDasharray="1 1" />}
    {out && <path d="M9 8.500h10" stroke="#8a8a8a" strokeDasharray="1 1" />}
    {box && <path d="M4.500 4.500h8v8h-8z" fill="#fff" stroke="#919191" />}
    {box && <path d="M6 8.500h5" stroke="#2b4a8b" />}
    {box === 'plus' && <path d="M8.500 6v5" stroke="#2b4a8b" />}
  </Icon>
);

/* ---------- rulers and grid ---------- */

const CM = 39.36;
const STEP = CM / 5;
const range = (n: number) => Array.from({ length: n }, (_, i) => i);

const HorizontalRuler = () => (
  <svg width="827" height="15" shapeRendering="crispEdges">
    <path d="M0 0h827v15H0z" fill="#e6e6e6" /><path d="M79 1h708v13H79z" fill="#fff" /><path d="M825 1h1v13h-1z" fill="#c3d3ec" />
    {range(18).map(i => <path key={i} d={`M${Math.round(78 + (i + 0.5) * CM)}.5 3v9`} stroke="#555" />)}
    {range(19).map(i => (
      <text key={i} x={Math.round(78 + i * CM)} y="10" textAnchor="middle" fontSize="7" fontFamily="Liberation Sans" fill="#666b78">{i * 10}</text>
    ))}
  </svg>
);
const VerticalRuler = () => (
  <svg width="15" height="1170" shapeRendering="crispEdges">
    <path d="M0 0h15v1170H0z" fill="#e6e6e6" /><path d="M1 40h13v1090H1z" fill="#fff" /><path d="M1 303h13v5H1z" fill="#c3d5f5" />
    {range(20).map(i => <path key={i} d={`M3 ${Math.round(39 + (i + 0.5) * CM)}.5h9`} stroke="#555" />)}
    {range(21).map(i => (
      <text key={i} x="7" y={Math.round(42 + i * CM)} textAnchor="middle" fontSize="7" fontFamily="Liberation Sans" fill="#666b78">{i * 10}</text>
    ))}
  </svg>
);
const DesignGrid = () => {
  const w = 710;
  const h = 1091;
  const parts = (odd: number, limit: number, seg: (p: number) => string) =>
    range(Math.floor(limit / STEP)).filter(i => i > 0 && i % 2 === odd).map(i => seg(Math.round(i * STEP))).join('');
  const both = (odd: number) => parts(odd, w, p => `M${p}.5 0v${h}`) + parts(odd, h, p => `M0 ${p}.5h${w}`);
  return (
    <svg width={w} height={h} shapeRendering="crispEdges">
      <path d={both(1)} stroke="#dadada" />
      <path d={both(0)} stroke="#b9b9b9" />
      <path d={`M.5.5h${w - 1}v${h - 1}H.5z`} stroke="#6e6e6e" fill="none" />
    </svg>
  );
};

/* ---------- data ---------- */

const tabs = [
  { name: 'Ausgangsposition', w: 135, active: true },
  { name: 'Zellen einfügen', w: 117 },
  { name: 'Seite', w: 60 },
  { name: 'Layout', w: 70 },
  { name: 'Vorschau', w: 83, shaded: true },
];
const flyouts = [
  ['Bänder', <BandsIcon />], ['Kreuzbänder', <CrossIcon />], ['Komponenten', <ComponentsIcon />],
  ['Barcodes', <BarcodeIcon />], ['Formen', <ShapesIcon />], ['Erweiterungen', <PuzzleIcon />],
] as [string, React.ReactNode][];
const boxTools = [
  ['Berichtstitel', <TitleBandIcon />], ['Berichtsübersicht', <DataBandIcon />], ['Seitenkopf', <HeadBandIcon />],
  ['Seitenfuß', <HeadBandIcon foot />], ['Kopfband', <PanelIcon />], ['Fußband', <PanelIcon foot />],
  ['Datenband', <SubPanelIcon />], ['Text', <TextIcon />], ['Bild', <ImageIcon />], ['Barcode', <BarcodeIcon />],
  ['Panel', <PanelDottedIcon />], ['Horizontale Linie', <ShapeIcon d="M2 7.500h12" />],
  ['Vertikale Linie', <ShapeIcon d="M8.500 2v12" />], ['Rechteck', <ShapeIcon />],
  ['Abgerundetes Rechteck', <ShapeIcon r={2} />], ['Diagramm', <ChartIcon />], ['Tabelle', <TableIcon />],
  ['Kreuztabelle', <CrossTabIcon />],
] as [string, React.ReactNode][];
const alignTop = [
  ['Oben', [[0, 0, 14], [2, 3, 10], [0, 6, 14]]],
  ['Mitte', [[0, 3, 14], [2, 6, 10], [0, 9, 14]]],
  ['Unten', [[0, 7, 14], [2, 10, 10], [0, 13, 14]]],
] as [string, number[][]][];
const alignText = [
  ['Links', [[0, 2, 14], [0, 5, 9], [0, 8, 14], [0, 11, 9]]],
  ['Zentriert', [[0, 2, 14], [2, 5, 10], [0, 8, 14], [2, 11, 10]]],
  ['Rechts', [[0, 2, 14], [5, 5, 9], [0, 8, 14], [5, 11, 9]]],
  ['Blocksatz', [[0, 2, 14], [0, 5, 14], [0, 8, 14], [0, 11, 14]]],
] as [string, number[][]][];
const borders = ['all', 'none', 'top', 'left', 'bottom', 'right'];

const RibbonGroup = ({ name, w, pad, launcher, children }: { name: string; w: number; pad?: string; launcher?: boolean; children: React.ReactNode }) => (
  <Group $w={w}>
    <GroupBody $pad={pad}>{children}</GroupBody>
    <GroupFoot>
      <GroupName>{name}</GroupName>
      {launcher && <PlainButton aria-label={`${name} öffnen`}><Launcher /></PlainButton>}
    </GroupFoot>
  </Group>
);
const Drop = ({ color, label }: { color?: string; label: string }) => (
  <CaretButton aria-label={label}><Caret color={color} /></CaretButton>
);

export default function App() {
  return (
    <>
      <GlobalStyle />
      <Window>
        <TitleBar>
          <QuickAccess>
            <PlainButton aria-label="Speichern"><SaveIcon /></PlainButton>
            <PlainButton aria-label="Rückgängig"><UndoIcon /></PlainButton>
            <PlainButton aria-label="Wiederholen"><UndoIcon color="#bcbcbc" flip /></PlainButton>
          </QuickAccess>
          <Title>SystemList.mrt - Designer</Title>
          <WindowButtons>
            <PlainButton aria-label="Minimieren"><Icon><path d="M4 12h9v2H4z" fill="#111" /></Icon></PlainButton>
            <PlainButton aria-label="Maximieren"><Icon><path d="M3.500 4.500h9v8h-9z" stroke="#111" /><path d="M3 4h10v3H3z" fill="#111" /></Icon></PlainButton>
            <PlainButton aria-label="Schließen"><Icon soft><path d="M3 3.500l10 10M13 3.500l-10 10" stroke="#111" strokeWidth="2" /></Icon></PlainButton>
          </WindowButtons>
        </TitleBar>

        <Tabs>
          {tabs.map(t => <Tab key={t.name} $w={t.w} $active={t.active} $shaded={t.shaded}>{t.name}</Tab>)}
        </Tabs>

        <Ribbon>
          <RibbonGroup name="Zwischenablage" w={170} pad="0 0 0 8px">
            <BigButton $w={58}><PasteIcon />Einfügen</BigButton>
            <ClipList>
              <ClipButton><CutIcon />Ausschneiden</ClipButton>
              <ClipButton><CopyIcon />Kopieren</ClipButton>
              <ClipButton><DeleteIcon />Löschen</ClipButton>
            </ClipList>
          </RibbonGroup>

          <RibbonGroup name="Schriftart" w={195} pad="12px 0 0 3px">
            <ToolRows>
              <Combos>
                <SelectBox $w={127}><select aria-label="Schriftart"><option> </option></select><Caret color="#8a8a8a" /></SelectBox>
                <SelectBox $w={50}><select aria-label="Schriftgröße"><option>8</option></select><Caret color="#8a8a8a" /></SelectBox>
              </Combos>
              <ToolRow>
                <Tool aria-label="Fett"><Glyph>B</Glyph></Tool>
                <Tool aria-label="Kursiv"><Glyph $italic>I</Glyph></Tool>
                <Tool aria-label="Unterstrichen"><Glyph $line>U</Glyph></Tool>
                <Tool aria-label="Schriftfarbe"><Glyph>A</Glyph></Tool><Drop label="Schriftfarbe wählen" color="#9a9a9a" />
                <Tool aria-label="Schrift vergrößern"><GrowIcon /></Tool>
                <Tool aria-label="Schrift verkleinern"><GrowIcon down /></Tool>
                <Tool aria-label="Format löschen"><EraserIcon /></Tool>
              </ToolRow>
            </ToolRows>
          </RibbonGroup>

          <RibbonGroup name="Ausrichtung" w={145} pad="12px 0 0 3px">
            <ToolRows>
              <ToolRow>
                {alignTop.map(([n, rows]) => <Tool key={n} aria-label={n}><Lines rows={rows} /></Tool>)}
                <Tool aria-label="Drehen"><RotateIcon /></Tool><Drop label="Winkel" color="#9a9a9a" />
                <Tool aria-label="Umbruch"><WrapIcon /></Tool>
              </ToolRow>
              <ToolRow>
                {alignText.map(([n, rows]) => <Tool key={n} aria-label={n}><Lines rows={rows} /></Tool>)}
                <Tool aria-label="Zeilenabstand"><SpacingIcon /></Tool><Drop label="Abstand" color="#9a9a9a" />
              </ToolRow>
            </ToolRows>
          </RibbonGroup>

          <RibbonGroup name="Rahmen" w={157} pad="12px 0 0 3px" launcher>
            <ToolRows>
              <ToolRow>
                {borders.map(b => <Tool key={b} aria-label={`Rahmen ${b}`} $on={b === 'none'}><BorderIcon side={b} /></Tool>)}
              </ToolRow>
              <ToolRow>
                <Tool aria-label="Schatten"><ShadowIcon /></Tool>
                <Tool aria-label="Füllfarbe"><BucketIcon /></Tool><Drop label="Füllfarbe wählen" />
                <Tool aria-label="Rahmenfarbe"><PenIcon /></Tool><Drop label="Rahmenfarbe wählen" />
                <Tool aria-label="Rahmenstil" $w={40}><LineStyleIcon /></Tool><Drop label="Rahmenstil wählen" />
              </ToolRow>
            </ToolRows>
          </RibbonGroup>

          <RibbonGroup name="Textformat" w={110} pad="12px 0 0 6px">
            <ToolRows>
              <SelectBox $w={98} $flat><select aria-label="Textformat"><option>Textformat</option></select><Caret color="#9a9a9a" /></SelectBox>
              <ToolRow $indent={10}>
                <Tool aria-label="Währung"><CurrencyIcon /></Tool><Drop label="Währung wählen" color="#9a9a9a" />
                <Tool aria-label="Datum"><DateIcon /></Tool><Drop label="Datum wählen" color="#9a9a9a" />
              </ToolRow>
            </ToolRows>
          </RibbonGroup>

          <RibbonGroup name="Stile" w={203} pad="0 0 0 4px" launcher>
            <BigButton $w={76}><ConditionsIcon />Bedingungen</BigButton>
            <BigButton $w={59}><BrushIcon />Stil kopieren</BigButton>
            <BigButton $w={60}><StyleEditorIcon />Stil-Editor</BigButton>
          </RibbonGroup>
        </Ribbon>

        <Workspace>
          <Toolbox>
            {flyouts.map(([n, icon]) => <FlyoutTool key={n} aria-label={n}><span>{icon}</span><SideCaret /></FlyoutTool>)}
            <BoxRule />
            {boxTools.map(([n, icon]) => <BoxTool key={n} aria-label={n}>{icon}</BoxTool>)}
            <BoxRule />
            <BoxTool aria-label="Werkzeuge"><WrenchIcon /></BoxTool>
          </Toolbox>

          <Editor>
            <DocTabs>
              <DocTab $active><PageIcon />ReportPage</DocTab>
              <DocTab><CodeIcon />Code</DocTab>
            </DocTabs>
            <TopRuler><HorizontalRuler /></TopRuler>
            <EditorBody>
              <SideRuler><VerticalRuler /></SideRuler>
              <Canvas><Paper><DesignGrid /></Paper></Canvas>
              <Scrollbar>
                <Icon w={10} h={5}><path d="M5 0l5 5H0z" fill="#aaa" /></Icon>
                <ScrollTrack><ScrollThumb /></ScrollTrack>
                <Icon w={10} h={5}><path d="M0 0h10L5 5z" fill="#aaa" /></Icon>
              </Scrollbar>
            </EditorBody>
          </Editor>

          <Dock>
            <DockPanel>
              <DockTitle>
                <h2>Wörterbuch</h2>
                <DockTitleButton aria-label="Anheften"><PinIcon /></DockTitleButton>
                <DockTitleButton aria-label="Fenster schließen"><CloseSmallIcon /></DockTitleButton>
              </DockTitle>
              <DockTools>
                <TextTool>Funktionen<Caret /></TextTool>
                <DockTool $w={36} aria-label="Neues Element"><NewItemIcon /><Caret /></DockTool>
                <DockTool $w={24} aria-label="Bearbeiten"><EditIcon /></DockTool>
                <DockTool $w={22} aria-label="Löschen"><DeleteIcon color="#d9533b" /></DockTool>
                <ToolRule />
                <DockTool $w={24} aria-label="Nach oben"><MoveIcon /></DockTool>
                <DockTool $w={20} aria-label="Nach unten"><MoveIcon down /></DockTool>
                <ToolRule />
                <DockTool $w={36} aria-label="Einstellungen"><GearIcon /><Caret /></DockTool>
              </DockTools>
              <Tree>
                <TreeRow><Branch box="minus" down /><DataIcon /><TreeLabel>Datenquellen</TreeLabel></TreeRow>
                <TreeRow><Branch up down out={false} /><Branch box="plus" up /><DbIcon /><TreeLabel $selected>DocuSnap [MS SQL]</TreeLabel></TreeRow>
                <TreeRow><Branch up down /><ObjectIcon /><TreeLabel>Geschäftsobjekt</TreeLabel></TreeRow>
                <TreeRow><Branch box="plus" up down /><TagIcon text="VAR" /><TreeLabel>Variablen</TreeLabel></TreeRow>
                <TreeRow><Branch box="plus" up down /><TagIcon text="Σ#" /><TreeLabel>Systemvariablen</TreeLabel></TreeRow>
                <TreeRow><Branch box="plus" up down /><FxIcon /><TreeLabel>Funktionen</TreeLabel></TreeRow>
                <TreeRow><Branch up /><ResourceIcon /><TreeLabel>Ressourcen</TreeLabel></TreeRow>
              </Tree>
            </DockPanel>
            <DockTabs>
              <DockTab><PropsIcon />Eigenschaften</DockTab>
              <DockTab $active><DictIcon />Wörterbuch</DockTab>
              <DockTab><OutlineIcon />Berichtsbaum</DockTab>
            </DockTabs>
          </Dock>
        </Workspace>

        <StatusBar>
          <StatusButton $gap={14}>-Keine Auswahl-<Icon w={6} h={4}><path d="M2 0h1v1H2zM1 1h3v1H1zM0 2h5v1H0z" fill="#fff" /></Icon></StatusButton>
          <StatusRule />
          <StatusButton aria-label="Bericht aktualisieren"><RefreshReportIcon /></StatusButton>
          <StatusRule />
          <StatusButton aria-label="Schlüssel"><KeyIcon /></StatusButton>
          <StatusRule />
          <StatusCheck><input type="checkbox" />Berichtsstil verwenden</StatusCheck>
          <StatusRule />
          <StatusButton $gap={8}><Icon w={12} h={12} soft><path d="M4 0v12l6-6z" fill="#fff" /></Icon>Vor Ausgabe prüfen</StatusButton>
          <Push />
          <ZoomModes>
            <StatusButton aria-label="Seitenbreite"><Icon w={14} h={14}><path d="M0 1h14v12H0z" fill="#fff" /><path d="M3 3.500h8M3 10.500h8M4 5.500h6M2 7.500h10M4 8.500h6" stroke={steel} /><path d="M1 7l3-3v6zM13 7l-3-3v6z" fill={steel} /></Icon></StatusButton>
            <StatusButton aria-label="Ganze Höhe"><Icon w={14} h={14}><path d="M1 0h13v14H1z" fill="#fff" /><path d="M2 5.500h11M2 8.500h11" stroke={steel} /><path d="M7.500 1l3 3h-6zM7.500 13l3-3h-6z" fill={steel} /></Icon></StatusButton>
            <StatusButton aria-label="Ganze Seite"><Icon w={14} h={14}><path d="M1 0h12v14H1z" fill="#fff" /><path d="M3.500 2.500h7v9h-7z" stroke={steel} /><path d="M5 5.500h4M5 7.500h4M5 9.500h4" stroke={steel} /></Icon></StatusButton>
            <StatusButton aria-label="Originalgröße"><Icon soft><path d="M1 0h7l4 4v5H1z" fill="#fff" /><path d="M2 3.500h5M2 5.500h8" stroke="#999" /><path d="M2 8h14v8H2z" fill={steel} /><text x="3" y="14.500" fontSize="7" fontWeight="bold" fontFamily="Liberation Sans" fill="#fff">100</text></Icon></StatusButton>
          </ZoomModes>
          <ZoomValue>100%</ZoomValue>
          <StatusButton aria-label="Verkleinern"><Icon w={8} h={8}><path d="M0 3h8v2H0z" fill="#fff" /></Icon></StatusButton>
          <ZoomSlider type="range" aria-label="Zoom" min={0} max={200} defaultValue={100} />
          <StatusButton aria-label="Vergrößern"><Icon w={8} h={8}><path d="M0 3h8v2H0zM3 0h2v8H3z" fill="#fff" /></Icon></StatusButton>
          <Grip><Icon w={11} h={11}><path d="M8 0h2v2H8zM4 4h2v2H4zM8 4h2v2H8zM0 8h2v2H0zM4 8h2v2H4zM8 8h2v2H8z" fill="#c9c9c9" /></Icon></Grip>
        </StatusBar>

        <Leaders width="1365" height="1081" fill="none" stroke="#c0504d">
          <path d="M797 61l62-27h19M20 251l51-28h16M487 361l24 59h15M1116 325l-17 85h-19M110 1063l31-46h15" />
        </Leaders>
        <Callout $x={894} $y={26} $w={220}>Multifunktionsleiste</Callout>
        <Callout $x={100} $y={215} $w={182}>Werkzeugleiste</Callout>
        <Callout $x={538} $y={411} $w={171}>Arbeitsbereich</Callout>
        <Callout $x={833} $y={385} $w={228}>{'Informationsfenster\nEigenschaften\nWörterbuch\nBerichtsbaum'}</Callout>
        <Callout $x={168} $y={1009} $w={171}>Statusleiste</Callout>
      </Window>
    </>
  );
}
